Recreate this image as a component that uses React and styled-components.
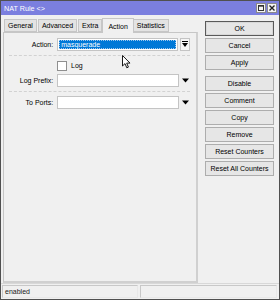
import React from "react";
import styled, { createGlobalStyle } from "styled-components";

const Global = createGlobalStyle`
  html, body { margin: 0; padding: 0; background: #f0f0f0; }
  body { font-family: "Liberation Sans", Arial, sans-serif; font-size: 7px; color: #000; }
  * { box-sizing: border-box; }
`;

const Window = styled.div`
  position: relative;
  width: 280px;
  height: 300px;
  border: 1px solid #505050;
  background: #f0f0f0;
  display: flex;
  flex-direction: column;
`;

const TitleBar = styled.div`
  height: 14px;
  background: #7b7fdf;
  color: #fff;
  display: flex;
  align-items: center;
  padding: 0 2px 0 3px;
  font-size: 7.2px;
`;

const Title = styled.span`
  flex: 1;
`;

const WinButton = styled.div`
  width: 10px;
  height: 10px;
  margin-left: 1px;
  background: #f4f4f4;
  border: 1px solid #8a8a8a;
  display: flex;
  align-items: center;
  justify-content: center;
`;

const Body = styled.div`
  flex: 1;
  display: flex;
  padding: 2px 0 0 2px;
`;

const LeftCol = styled.div`
  width: 195px;
  display: flex;
  flex-direction: column;
`;

const Tabs = styled.div`
  display: flex;
  align-items: flex-end;
  height: 15px;
  padding-left: 1px;
`;

const Tab = styled.div`
  height: ${(p) => (p.$active ? "15px" : "13px")};
  padding: 0 ${(p) => (p.$active ? "5px" : "3px")};
  margin: ${(p) => (p.$active ? "0 -1px -1px" : "0")};
  display: flex;
  align-items: center;
  background: ${(p) => (p.$active ? "#f0f0f0" : "#e3e3e3")};
  border: 1px solid #c6c6c6;
  border-bottom: ${(p) => (p.$active ? "none" : "1px solid #c6c6c6")};
  margin-right: ${(p) => (p.$active ? "-1px" : "1px")};
  position: relative;
  z-index: ${(p) => (p.$active ? 1 : 0)};
`;

const Panel = styled.div`
  flex: 1;
  border: 1px solid #c6c6c6;
  border-right: 2px solid #d0d0d0;
  border-bottom: 2px solid #d0d0d0;
  padding: 5px 6px 0 5px;
  display: flex;
  flex-direction: column;
`;

const Row = styled.div`
  display: flex;
  align-items: center;
  height: 13px;
  margin-bottom: ${(p) => p.$mb || 0}px;
`;

const Label = styled.div`
  width: 46px;
  text-align: right;
  padding-right: 1px;
  margin-right: 3px;
  white-space: nowrap;
`;

const Field = styled.div`
  width: ${(p) => p.$w}px;
  height: 13px;
  background: #fff;
  border: 1px solid #c4c4c4;
  display: flex;
  align-items: center;
  padding: 1px;
`;

const Selected = styled.div`
  flex: 1;
  height: 100%;
  background: #0078d7;
  color: #fff;
  display: flex;
  align-items: center;
  padding-left: 1px;
  border: 1px dotted #9cc7ee;
`;

const DropBox = styled.div`
  width: 10px;
  height: 13px;
  margin-left: 2px;
  background: #f5f5f5;
  border: 1px solid #c4c4c4;
  display: flex;
  align-items: center;
  justify-content: center;
`;

const Arrow = styled.div`
  width: 10px;
  height: 13px;
  margin-left: 1px;
  display: flex;
  align-items: center;
  justify-content: center;
`;

const Separator = styled.div`
  height: 0;
  border-top: 1px dashed #d2d2d2;
  margin: ${(p) => p.$m};
`;

const CheckRow = styled.div`
  display: flex;
  align-items: center;
  height: 11px;
  padding-left: 48px;
  margin-bottom: 3px;
`;

const CheckBox = styled.div`
  width: 10px;
  height: 10px;
  background: #fff;
  border: 1px solid #8f8f8f;
  margin-right: 4px;
`;

const RightCol = styled.div`
  flex: 1;
  padding: 4px 0 0 7px;
  display: flex;
  flex-direction: column;
`;

const Button = styled.div`
  width: 69px;
  height: 15px;
  margin-bottom: ${(p) => p.$mb}px;
  background: #e6e6e6;
  border: 1px solid ${(p) => (p.$default ? "#5a5a5a" : "#adadad")};
  box-shadow: ${(p) => (p.$default ? "inset 0 0 0 1px #d8d8d8" : "none")};
  display: flex;
  align-items: center;
  justify-content: center;
`;

const StatusBar = styled.div`
  height: 16px;
  display: flex;
  gap: 2px;
  padding: 1px 2px 1px 1px;
  border-top: 1px solid #d8d8d8;
`;

const StatusCell = styled.div`
  flex: ${(p) => p.$flex};
  border: 1px solid #c8c8c8;
  border-right-color: #e8e8e8;
  border-bottom-color: #e8e8e8;
  display: flex;
  align-items: center;
  padding-left: 2px;
  color: #222;
`;

const Cursor = styled.svg`
  position: absolute;
  left: 121px;
  top: 54px;
`;

const DownTri = () => (
  <svg width="7" height="5" viewBox="0 0 7 5">
    <path d="M0 0.5 H7 L3.5 4.5 Z" fill="#000" />
  </svg>
);

const tabs = ["General", "Advanced", "Extra", "Action", "Statistics"];
const buttons = [
  ["OK", 2, true],
  ["Cancel", 2],
  ["Apply", 6],
  ["Disable", 2],
  ["Comment", 2],
  ["Copy", 2],
  ["Remove", 2],
  ["Reset Counters", 2],
  ["Reset All Counters", 2],
];

export default function App() {
  return (
    <>
      <Global />
      <Window>
        <TitleBar>
          <Title>NAT Rule &lt;&gt;</Title>
          <WinButton>
            <svg width="6" height="6" viewBox="0 0 6 6">
              <rect x="0.5" y="0.5" width="5" height="5" fill="none" stroke="#333" />
              <line x1="0" y1="1.2" x2="6" y2="1.2" stroke="#333" />
            </svg>
          </WinButton>
          <WinButton>
            <svg width="6" height="6" viewBox="0 0 6 6">
              <path d="M0.5 0.5 L5.5 5.5 M5.5 0.5 L0.5 5.5" stroke="#222" strokeWidth="1.4" />
            </svg>
          </WinButton>
        </TitleBar>
        <Body>
          <LeftCol>
            <Tabs>
              {tabs.map((t) => (
                <Tab key={t} $active={t === "Action"}>
                  {t}
                </Tab>
              ))}
            </Tabs>
            <Panel>
              <Row>
                <Label>Action:</Label>
                <Field $w={123}>
                  <Selected>masquerade</Selected>
                </Field>
                <DropBox>
                  <svg width="6" height="7" viewBox="0 0 6 7">
                    <line x1="0" y1="0.5" x2="6" y2="0.5" stroke="#000" />
                    <path d="M0 2 H6 L3 6 Z" fill="#000" />
                  </svg>
                </DropBox>
              </Row>
              <Separator $m="4px 0 4px 0" />
              <CheckRow>
                <CheckBox />
                Log
              </CheckRow>
              <Row>
                <Label>Log Prefix:</Label>
                <Field $w={124} />
                <Arrow>
                  <DownTri />
                </Arrow>
              </Row>
              <Separator $m="4px 0 4px 0" />
              <Row>
                <Label>To Ports:</Label>
                <Field $w={124} />
                <Arrow>
                  <DownTri />
                </Arrow>
              </Row>
            </Panel>
          </LeftCol>
          <RightCol>
            {buttons.map(([b, mb, d]) => (
              <Button key={b} $mb={mb} $default={d}>
                {b}
              </Button>
            ))}
          </RightCol>
        </Body>
        <StatusBar>
          <StatusCell $flex="135">enabled</StatusCell>
          <StatusCell $flex="137" />
        </StatusBar>
        <Cursor width="9" height="14" viewBox="0 0 9 14">
          <path d="M0.5 0.5 L0.5 11 L3 8.6 L4.8 12.8 L6.4 12.1 L4.7 8.1 L8 8.1 Z" fill="#fff" stroke="#000" strokeWidth="0.9" strokeLinejoin="round" />
        </Cursor>
      </Window>
    </>
  );
}
